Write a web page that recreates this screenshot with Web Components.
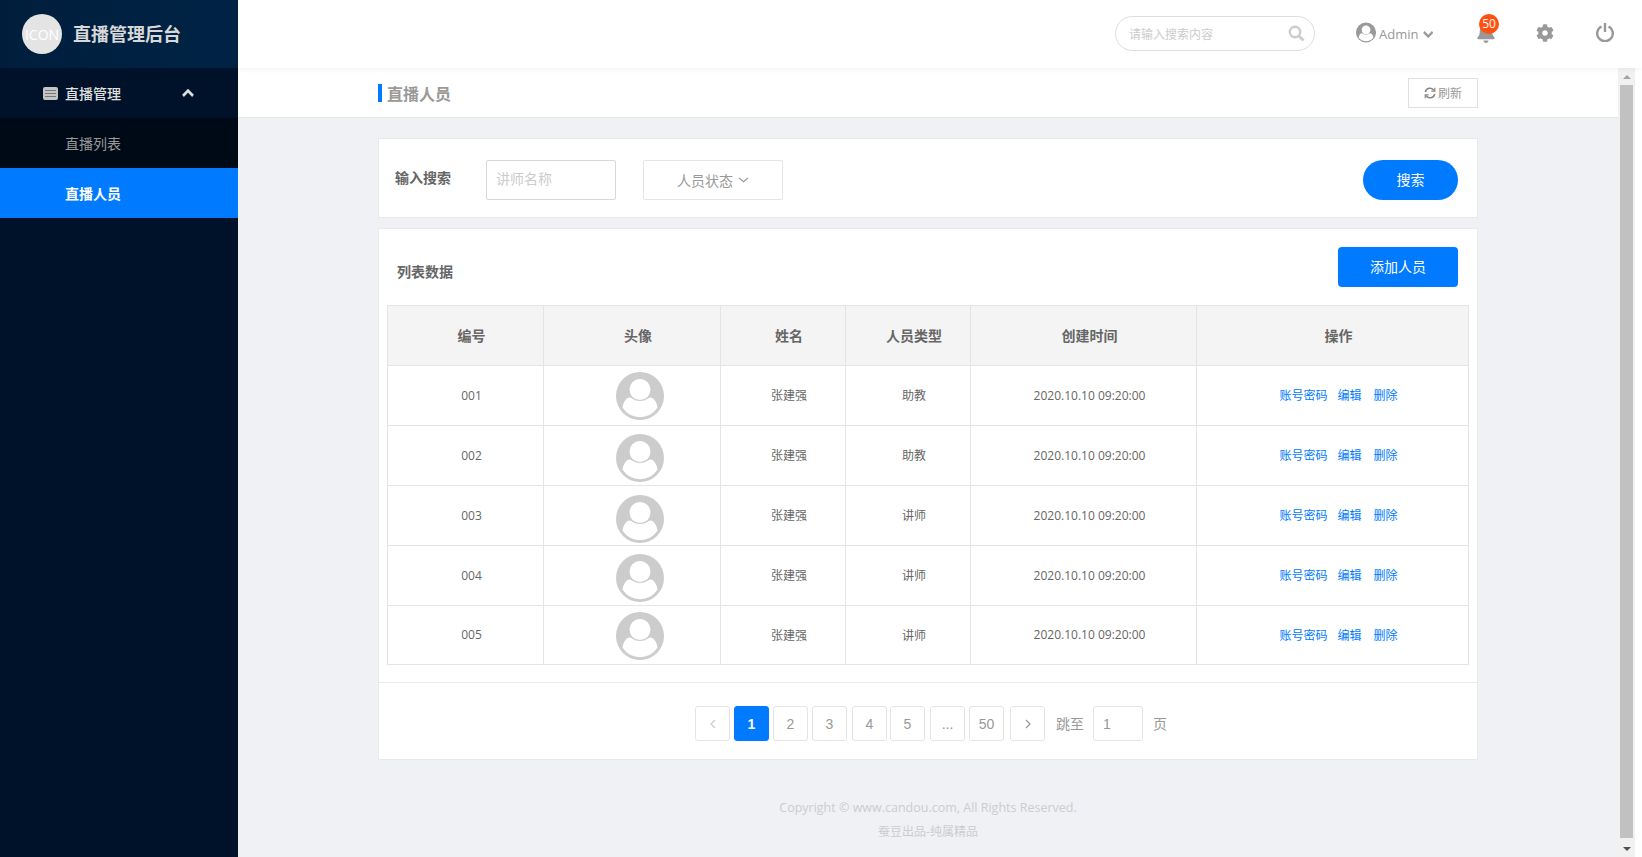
<!DOCTYPE html>
<html lang="zh-CN">
<head>
<meta charset="utf-8">
<title>直播人员</title>
<style>
  html, body { margin: 0; height: 100%; overflow: hidden; background: #fff; }
  body {
    display: flex;
    font: 14px "Open Sans", "Noto Sans CJK SC", sans-serif;
    color: #666;
  }
  .right { flex: 1; min-width: 0; display: flex; flex-direction: column; }
  .below { flex: 1; min-height: 0; display: flex; }
  .main { flex: 1; min-width: 0; display: flex; flex-direction: column; background: #f0f1f5; }
</style>
</head>
<body>
<admin-sidebar></admin-sidebar>
<div class="right">
  <top-bar></top-bar>
  <div class="below">
    <div class="main">
      <page-title text="直播人员"></page-title>
      <search-card></search-card>
      <list-card>
        <data-table></data-table>
        <pager-bar slot="pager"></pager-bar>
      </list-card>
      <page-footer></page-footer>
    </div>
    <fake-scrollbar></fake-scrollbar>
  </div>
</div>

<script>
// 头像和顶栏用户图标共用一个图形
const userIcon = (size, color) => `
  <svg width="${size}" height="${size}" viewBox="0 0 48 48">
    <circle cx="24" cy="24" r="24" fill="${color}"/>
    <path fill="#fff" d="M9.500 28C11.500 25.300 14 25 16 26.500a14 14 0 0 0 16 0c2-1.500 4.500-1.200 6.500 1.500 1.700 2.400 2.800 5 3 7.800a21 21 0 0 1-35 0c.2-2.800 1.300-5.400 3-7.800z"/>
    <circle cx="24" cy="17.500" r="10.500" fill="#fff"/>
  </svg>`;

const chevron = (w, h, color, sw, up) => `
  <svg width="${w}" height="${h}" viewBox="0 0 12 7" preserveAspectRatio="none">
    <path d="${up ? "M1 6l5-4.500 5 4.500" : "M1 1l5 4.500 5-4.500"}" fill="none" stroke="${color}" stroke-width="${sw}"/>
  </svg>`;

const CJK = `"Open Sans", "Noto Sans CJK SC", sans-serif`;

customElements.define("admin-sidebar", class extends HTMLElement {
  constructor() {
    super();
    this.attachShadow({ mode: "open" }).innerHTML = `
      <style>
        :host { display: block; width: 238px; flex: none; height: 100%; background: #001229; color: #ddd; font-family: ${CJK}; }
        .logo { height: 68px; box-sizing: border-box; padding-left: 22px; display: flex; align-items: center; gap: 11px;
          background: linear-gradient(90deg, #001e3c, #002345); }
        .circle { width: 40px; height: 40px; border-radius: 50%; background: #e4e4e4; color: #fff; font-size: 14px;
          display: flex; align-items: center; justify-content: center; }
        .name { font-size: 18px; font-weight: 700; color: #d8d8d8; position: relative; top: -1px; }
        .row { height: 50px; display: flex; align-items: center; padding-left: 65px; font-size: 14px; }
        .group { padding-left: 43px; gap: 7px; font-weight: 500; color: #e0e0e0; }
        .group span { flex: 1; }
        .group svg:last-child { margin-right: 44px; }
        .sub { background: #000a17; color: #999; }
        .on { background: #007aff; color: #fff; font-weight: 700; }
      </style>
      <div class="logo"><div class="circle">ICON</div><div class="name">直播管理后台</div></div>
      <div class="row group">
        <svg width="15" height="13" viewBox="0 0 15 13">
          <rect width="15" height="13" rx="2" fill="#c4c4c4"/>
          <path d="M2 3.500h11M2 6.500h11M2 9.500h11" stroke="#777" stroke-width="1"/>
        </svg>
        <span>直播管理</span>
        ${chevron(12, 8, "#ddd", 2.6, true)}
      </div>
      <div class="row sub">直播列表</div>
      <div class="row on">直播人员</div>`;
  }
});

customElements.define("top-bar", class extends HTMLElement {
  constructor() {
    super();
    this.attachShadow({ mode: "open" }).innerHTML = `
      <style>
        :host { display: flex; align-items: center; height: 68px; flex: none; background: #fff; position: relative; z-index: 1;
          box-shadow: 0 1px 6px rgba(0, 0, 0, .06); font-family: ${CJK}; }
        .search { margin-left: 877px; width: 200px; height: 35px; box-sizing: border-box; border: 1px solid #ddd; border-radius: 18px;
          display: flex; align-items: center; padding: 0 9px 0 13px; margin-top: -1px; }
        .search span { flex: 1; font-size: 12px; color: #ccc; }
        .user { margin-left: 41px; display: flex; align-items: center; width: 77px; }
        .user svg:first-child { margin-top: -4px; }
        .user span { margin: 0 4px 0 3px; font-size: 13px; color: #999; }
        .bell { margin-left: 44px; position: relative; width: 20px; height: 20px; top: -1px; }
        .badge { position: absolute; left: 2px; top: -9px; width: 20px; height: 20px; border-radius: 50%; background: #ff5011;
          color: #fff; font-size: 12px; line-height: 20px; text-align: center; }
        .gear { margin-left: 39px; margin-top: -2px; }
        .power { margin-left: 42px; margin-top: -4px; }
      </style>
      <div class="search">
        <span>请输入搜索内容</span>
        <svg width="17" height="17" viewBox="0 0 17 17"><circle cx="7" cy="7" r="5.200" fill="none" stroke="#ccc" stroke-width="2.400"/><path d="M11 11l4.500 4.500" stroke="#ccc" stroke-width="2.800"/></svg>
      </div>
      <div class="user">
        ${userIcon(21, "#999")}
        <span>Admin</span>
        ${chevron(11, 7, "#999", 2.4, false)}
      </div>
      <div class="bell">
        <svg width="18" height="20" viewBox="0 0 448 512"><path fill="#999" d="M224 512c35.320 0 63.970-28.650 63.970-64H160.030c0 35.350 28.650 64 63.970 64zm215.390-149.710c-19.320-20.760-55.470-51.990-55.470-154.290 0-77.700-54.480-139.900-127.940-155.160V32c0-17.670-14.320-32-31.980-32s-31.980 14.330-31.980 32v20.840C118.560 68.100 64.080 130.300 64.080 208c0 102.300-36.150 133.530-55.470 154.290-6 6.450-8.660 14.160-8.610 21.710.11 16.400 12.980 32 32.100 32h383.800c19.120 0 32-15.600 32.100-32 .05-7.550-2.610-15.270-8.610-21.710z"/></svg>
        <div class="badge">50</div>
      </div>
      <svg class="gear" width="18" height="18" viewBox="0 0 512 512"><path fill="#999" d="M487.400 315.700l-42.600-24.600c4.300-23.200 4.300-47 0-70.200l42.600-24.600c4.900-2.800 7.100-8.600 5.500-14-11.100-35.600-30-67.800-54.700-94.600-3.800-4.100-10-5.100-14.800-2.300L380.800 110c-17.900-15.400-38.500-27.300-60.800-35.100V25.800c0-5.600-3.900-10.500-9.400-11.700-36.700-8.200-74.300-7.800-109.200 0-5.500 1.200-9.400 6.100-9.400 11.700V75c-22.200 7.900-42.800 19.800-60.800 35.100L88.700 85.500c-4.900-2.800-11-1.900-14.800 2.300-24.700 26.700-43.600 58.900-54.700 94.600-1.700 5.400.6 11.200 5.500 14L67.300 221c-4.300 23.200-4.300 47 0 70.200l-42.600 24.600c-4.900 2.800-7.100 8.600-5.500 14 11.100 35.600 30 67.800 54.700 94.600 3.800 4.100 10 5.100 14.800 2.300l42.600-24.600c17.900 15.400 38.500 27.300 60.800 35.100v49.200c0 5.600 3.900 10.500 9.400 11.700 36.700 8.200 74.300 7.800 109.200 0 5.500-1.200 9.400-6.100 9.400-11.700v-49.200c22.200-7.900 42.800-19.800 60.800-35.100l42.600 24.600c4.900 2.800 11 1.900 14.800-2.300 24.700-26.700 43.600-58.900 54.700-94.600 1.500-5.500-.7-11.300-5.600-14.100zM256 336c-44.100 0-80-35.900-80-80s35.900-80 80-80 80 35.900 80 80-35.900 80-80 80z"/></svg>
      <svg class="power" width="18" height="20" viewBox="0 0 18 20"><path d="M5.500 4.500a7.800 7.800 0 1 0 7 0" fill="none" stroke="#999" stroke-width="2.400"/><path d="M9 1v9" stroke="#999" stroke-width="2.400"/></svg>`;
  }
});

customElements.define("page-title", class extends HTMLElement {
  constructor() {
    super();
    this.attachShadow({ mode: "open" }).innerHTML = `
      <style>
        :host { display: block; flex: none; background: #fff; border-bottom: 1px solid #e6e6e6; font-family: ${CJK}; }
        .in { width: 1100px; height: 49px; margin: 0 auto; display: flex; align-items: center; }
        .bar { width: 4px; height: 18px; background: #007aff; margin: 1px 5px 0 0; }
        .t { flex: 1; font-size: 16px; font-weight: 700; color: #999; }
        .btn { width: 70px; height: 30px; box-sizing: border-box; border: 1px solid #e0e0e0; display: flex; align-items: center;
          justify-content: center; gap: 2px; font-size: 12px; color: #999; }
      </style>
      <div class="in">
        <div class="bar"></div>
        <div class="t">${this.getAttribute("text")}</div>
        <div class="btn">
          <svg width="12" height="12" viewBox="0 0 12 12" fill="none" stroke="#888" stroke-width="1.500">
            <path d="M1.300 5A4.800 4.800 0 0 1 10 3.300"/><path d="M10.700 7A4.800 4.800 0 0 1 2 8.700"/>
            <path d="M10.800.8v3.400H7.400" stroke-width="1.200"/><path d="M1.200 11.200V7.800h3.400" stroke-width="1.200"/>
          </svg>
          刷新
        </div>
      </div>`;
  }
});

customElements.define("search-card", class extends HTMLElement {
  constructor() {
    super();
    this.attachShadow({ mode: "open" }).innerHTML = `
      <style>
        :host { display: flex; align-items: center; flex: none; width: 1100px; height: 80px; box-sizing: border-box; margin: 20px auto 0;
          background: #fff; border: 1px solid #e9e9e9; padding: 3px 19px 0 16px; font-family: ${CJK}; }
        .label { width: 91px; font-weight: 700; color: #666; position: relative; top: -3px; }
        .input { width: 130px; height: 40px; box-sizing: border-box; border: 1px solid #d8d8d8; border-radius: 2px; padding-left: 9px;
          line-height: 36px; color: #ccc; }
        .select { margin-left: 27px; width: 140px; height: 40px; box-sizing: border-box; border: 1px solid #e4e4e4; border-radius: 2px;
          display: flex; align-items: center; justify-content: center; gap: 5px; color: #999; }
        .go { margin-left: auto; width: 95px; height: 38px; padding-bottom: 2px; border-radius: 20px; background: #007aff; color: #fff;
          display: flex; align-items: center; justify-content: center; }
      </style>
      <div class="label">输入搜索</div>
      <div class="input">讲师名称</div>
      <div class="select">人员状态 ${chevron(11, 6, "#999", 1.400, false)}</div>
      <div class="go">搜索</div>`;
  }
});

customElements.define("list-card", class extends HTMLElement {
  constructor() {
    super();
    this.attachShadow({ mode: "open" }).innerHTML = `
      <style>
        :host { display: block; flex: none; width: 1100px; box-sizing: border-box; margin: 10px auto 0; background: #fff;
          border: 1px solid #e9e9e9; font-family: ${CJK}; }
        .head { display: flex; align-items: center; justify-content: space-between; padding: 18px 19px 18px 18px; }
        .head b { font-weight: 700; font-size: 14px; color: #666; position: relative; top: 4px; }
        .add { width: 120px; height: 38px; padding-bottom: 2px; border-radius: 4px; background: #007aff; color: #fff; font-size: 14px;
          display: flex; align-items: center; justify-content: center; }
        .body { padding: 0 8px 17px; }
      </style>
      <div class="head"><b>列表数据</b><div class="add">添加人员</div></div>
      <div class="body"><slot></slot></div>
      <slot name="pager"></slot>`;
  }
});

customElements.define("data-table", class extends HTMLElement {
  constructor() {
    super();
    // 头像的上边距每行都不一样
    const rows = [
      ["001", "助教", 6],
      ["002", "助教", 8],
      ["003", "讲师", 9],
      ["004", "讲师", 8],
      ["005", "讲师", 6],
    ];
    const body = rows.map(([no, kind, top]) => `
      <tr>
        <td>${no}</td>
        <td class="pic" style="padding-top:${top}px"><div>${userIcon(48, "#ccc")}</div></td>
        <td>张建强</td>
        <td>${kind}</td>
        <td>2020.10.10 09:20:00</td>
        <td class="ops"><a>账号密码</a><a>编辑</a><a>删除</a></td>
      </tr>`).join("");
    this.attachShadow({ mode: "open" }).innerHTML = `
      <style>
        :host { display: block; font-family: ${CJK}; }
        table { border-collapse: collapse; table-layout: fixed; width: 1081px; }
        th, td { box-sizing: border-box; height: 60px; border: 1px solid #e4e4e4; padding: 0 0 1px 12px; text-align: center;
          font-size: 12px; color: #666; }
        th { background: #f4f4f4; font-size: 14px; font-weight: 700; padding-bottom: 1px; }
        tr:last-child td { height: 59px; }
        td.pic { vertical-align: top; padding-bottom: 0; line-height: 0; }
        td.pic div { height: 40px; margin-left: 4px; }
        a { color: #007aff; margin-right: 10px; }
        a:last-child { margin-right: 0; }
        .ops a:nth-child(2) { margin-right: 12px; }
      </style>
      <table>
        <colgroup><col style="width:156px"><col style="width:177px"><col style="width:125px"><col style="width:125px"><col style="width:226px"><col style="width:272px"></colgroup>
        <tr><th>编号</th><th>头像</th><th>姓名</th><th>人员类型</th><th>创建时间</th><th>操作</th></tr>
        ${body}
      </table>`;
  }
});

customElements.define("pager-bar", class extends HTMLElement {
  constructor() {
    super();
    const pages = ["1", "2", "3", "4", "5", "...", "50"];
    this.attachShadow({ mode: "open" }).innerHTML = `
      <style>
        :host { display: flex; align-items: center; justify-content: flex-start; box-sizing: border-box; height: 77px; padding: 23px 0 18px 316px;
          border-top: 1px solid #e9e9e9; font: 14px "Liberation Sans", "Noto Sans CJK SC", sans-serif; color: #999; }
        .p { width: 35px; height: 35px; box-sizing: border-box; border: 1px solid #e4e4e4; border-radius: 3px; margin-right: 4px;
          display: flex; align-items: center; justify-content: center; }
        .on { background: #007aff; border-color: #007aff; color: #fff; font-weight: 700; }
        .p:nth-child(6) { margin: 0 3px 0 1px; }
        .p:nth-child(8) { margin-left: 1px; }
        .last { margin-left: 2px; margin-right: 11px; }
        span { position: relative; top: -1px; }
        .jump { width: 50px; height: 35px; box-sizing: border-box; border: 1px solid #e4e4e4; border-radius: 3px; margin: 0 10px 0 9px;
          padding-left: 9px; line-height: 34px; }
        svg { display: block; }
      </style>
      <div class="p"><svg width="6" height="10" viewBox="0 0 6 10"><path d="M5 1L1 5l4 4" fill="none" stroke="#ccc" stroke-width="1.200"/></svg></div>
      ${pages.map((n) => `<div class="p ${n === "1" ? "on" : ""}">${n}</div>`).join("")}
      <div class="p last"><svg width="6" height="10" viewBox="0 0 6 10"><path d="M1 1l4 4-4 4" fill="none" stroke="#999" stroke-width="1.200"/></svg></div>
      <span>跳至</span>
      <div class="jump">1</div>
      <span>页</span>`;
  }
});

customElements.define("page-footer", class extends HTMLElement {
  constructor() {
    super();
    this.attachShadow({ mode: "open" }).innerHTML = `
      <style>
        :host { display: block; flex: none; text-align: center; color: #ccc; font: 12.500px ${CJK}; margin-top: 36px; }
        div { height: 24px; line-height: 24px; }
        .b { font-size: 12px; }
      </style>
      <div>Copyright © www.candou.com, All Rights Reserved.</div>
      <div class="b">蚕豆出品-纯属精品</div>`;
  }
});

customElements.define("fake-scrollbar", class extends HTMLElement {
  constructor() {
    super();
    this.attachShadow({ mode: "open" }).innerHTML = `
      <style>
        :host { display: flex; flex-direction: column; align-items: center; flex: none; width: 17px; margin-right: 7px; background: #f1f1f1; }
        .up, .down { height: 17px; flex: none; display: flex; align-items: center; justify-content: center; }
        .up i { border: 4px solid transparent; border-top: 0; border-bottom: 4px solid #a3a3a3; }
        .down i { border: 4px solid transparent; border-bottom: 0; border-top: 4px solid #505050; }
        .thumb { flex: 1; width: 13px; background: #c1c1c1; margin-bottom: 2px; }
      </style>
      <div class="up"><i></i></div>
      <div class="thumb"></div>
      <div class="down"><i></i></div>`;
  }
});
</script>
</body>
</html>
